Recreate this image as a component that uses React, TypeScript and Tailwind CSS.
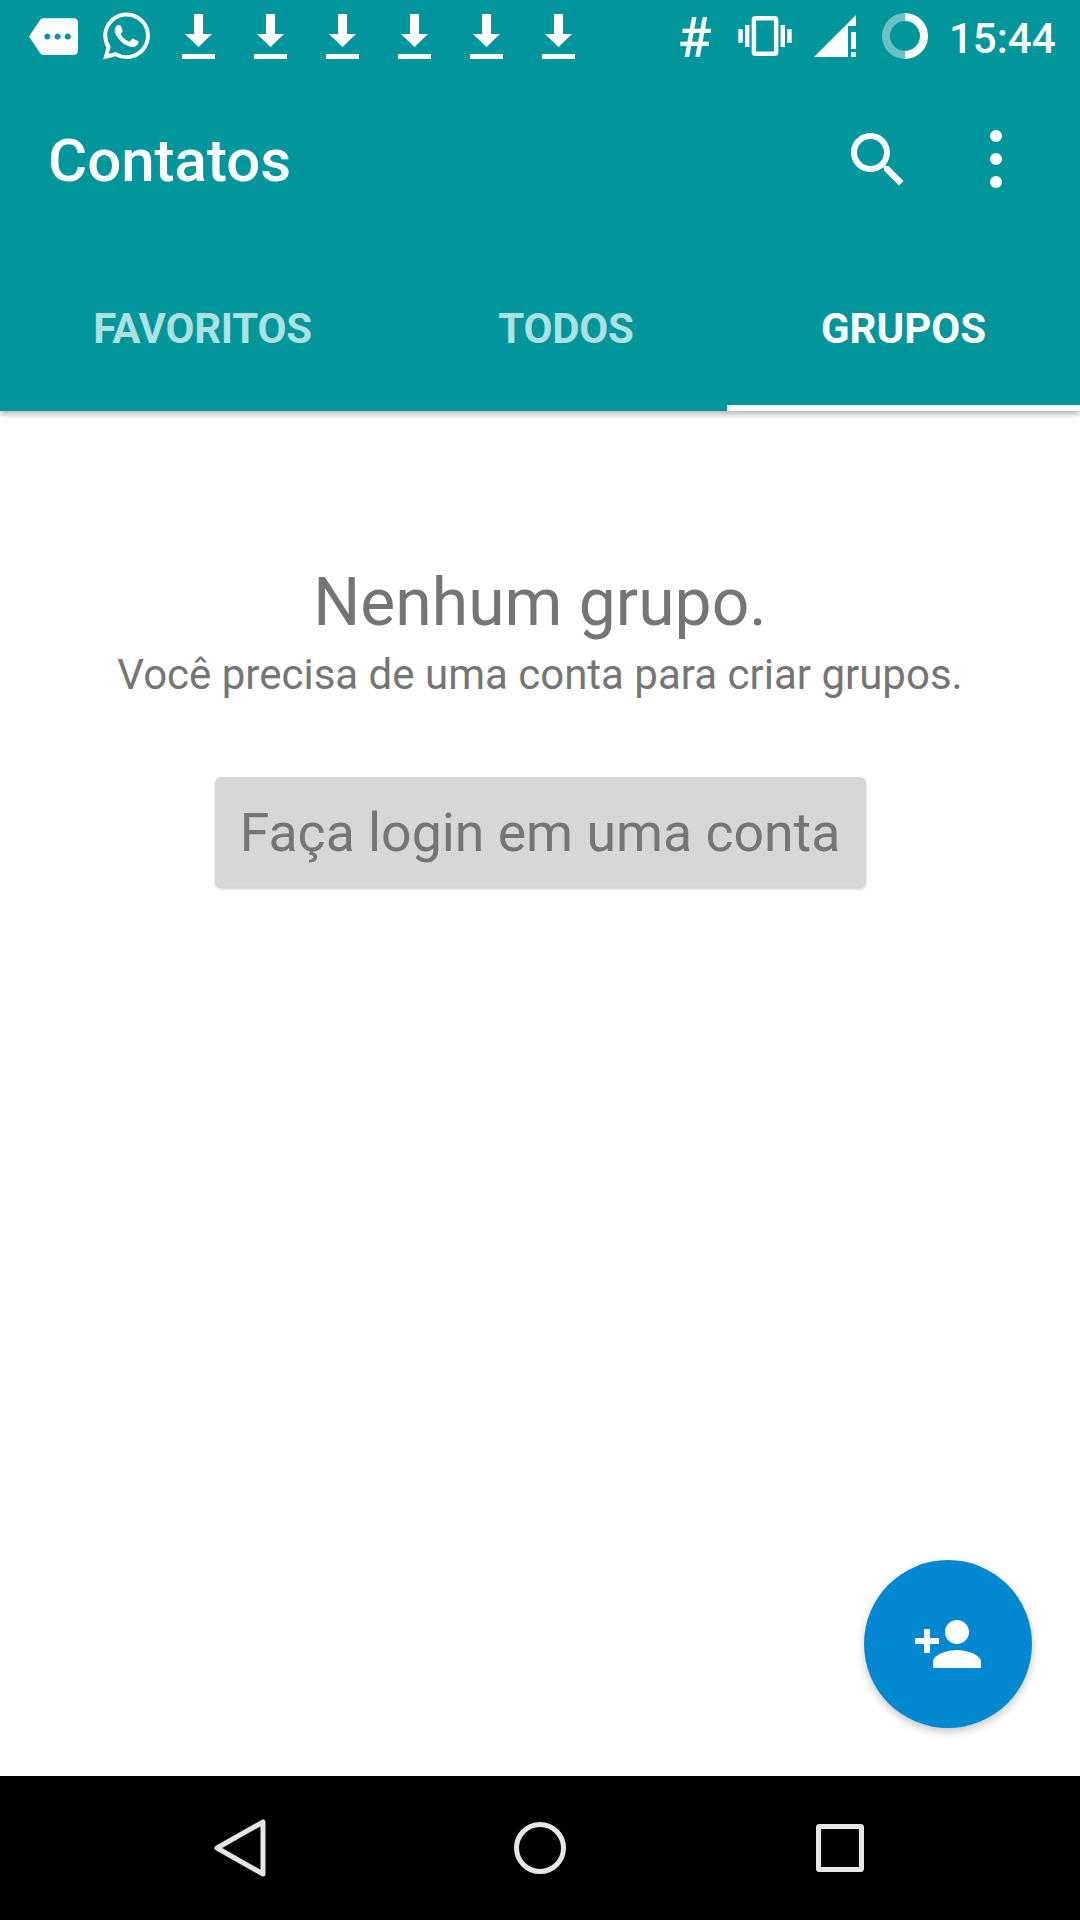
import React from "react";
import { SiWhatsapp } from "react-icons/si";

function Download() {
  return (
    <svg width="33" height="45" viewBox="0 0 33 45" fill="white" className="shrink-0">
      <path d="M12 0h9v20h9L16.5 33 3 20h9z" />
      <rect x="0" y="40" width="33" height="5" />
    </svg>
  );
}

export default function App() {
  return (
    <div className="relative flex h-[1920px] w-[1080px] flex-col overflow-hidden bg-white font-['Roboto',sans-serif]">
      <header className="relative z-10 flex flex-col bg-[#00969b] shadow-[0_3px_6px_rgba(0,0,0,0.3)]">
        {/* status bar */}
        <div className="flex h-[72px] items-center pl-[29px] text-white">
          <svg width="49" height="37" viewBox="0 3 24 18" fill="white" className="shrink-0">
            <path d="M22 3H7c-.69 0-1.23.35-1.59.88L0 12l5.41 8.11c.36.53.9.89 1.59.89h15c1.1 0 2-.9 2-2V5c0-1.1-.9-2-2-2zM9 13.5c-.83 0-1.5-.67-1.5-1.5s.67-1.5 1.5-1.5 1.5.67 1.5 1.5-.67 1.5-1.5 1.5zm5 0c-.83 0-1.5-.67-1.5-1.5s.67-1.5 1.5-1.5 1.5.67 1.5 1.5-.67 1.5-1.5 1.5zm5 0c-.83 0-1.5-.67-1.5-1.5s.67-1.5 1.5-1.5 1.5.67 1.5 1.5-.67 1.5-1.5 1.5z" />
          </svg>
          <SiWhatsapp className="ml-[25px] h-[48px] w-[47px] shrink-0" />
          <div className="ml-[32px] flex gap-[39px]">
            <Download />
            <Download />
            <Download />
            <Download />
            <Download />
            <Download />
          </div>
          <span className="mt-[3px] ml-[103px] w-[33px] text-center text-[56px] leading-none font-medium">#</span>
          <svg width="54" height="40" viewBox="0 3 24 18" fill="white" className="ml-[27px] shrink-0">
            <path d="M0 15h2V9H0v6zm3 2h2V7H3v10zm19-8v6h2V9h-2zm-3 8h2V7h-2v10zM16.5 3h-9C6.67 3 6 3.67 6 4.5v15c0 .83.67 1.5 1.5 1.5h9c.83 0 1.5-.67 1.5-1.5v-15c0-.83-.67-1.5-1.5-1.5zM16 19H8V5h8v14z" />
          </svg>
          <svg width="42" height="42" viewBox="0 0 42 42" fill="white" className="ml-[22px] shrink-0">
            <path d="M0 42 42 0v11H34v31z" />
            <rect x="37" y="17" width="5" height="17" />
            <rect x="37" y="37" width="5" height="5" />
          </svg>
          <svg width="46" height="46" viewBox="0 0 46 46" fill="none" strokeWidth="8" className="ml-[26px] shrink-0">
            <path d="M23 4a19 19 0 0 0 0 38" stroke="#6cc1c4" />
            <path d="M23 4a19 19 0 0 1 0 38" stroke="white" />
          </svg>
          <span className="mt-[6px] ml-[21px] text-[42px] leading-none font-medium">15:44</span>
        </div>
        {/* toolbar */}
        <div className="flex h-[174px] items-start pl-[48px] text-white">
          <h1 className="mt-[54px] text-[60px] leading-[70px] font-medium">Contatos</h1>
          <svg width="72" height="72" viewBox="0 0 24 24" fill="white" className="mt-[52px] ml-auto shrink-0">
            <path d="M15.5 14h-.79l-.28-.27C15.41 12.59 16 11.11 16 9.5 16 5.91 13.09 3 9.5 3S3 5.91 3 9.5 5.91 16 9.5 16c1.61 0 3.09-.59 4.23-1.57l.27.28v.79l5 4.99L20.49 19l-4.99-5zm-6 0C7.01 14 5 11.99 5 9.5S7.01 5 9.5 5 14 7.01 14 9.5 11.99 14 9.5 14z" />
          </svg>
          <svg width="12" height="58" viewBox="0 0 12 58" fill="white" className="mt-[58px] mr-[78px] ml-[76px] shrink-0">
            <circle cx="6" cy="6" r="6" />
            <circle cx="6" cy="29" r="6" />
            <circle cx="6" cy="52" r="6" />
          </svg>
        </div>
        {/* tabs */}
        <nav className="flex h-[165px] text-[42px] font-bold">
          <div className="flex w-[405px] items-center justify-center tracking-[-0.25px] text-[#ade0e0]">FAVORITOS</div>
          <div className="flex w-[322px] items-center justify-center tracking-[-0.25px] text-[#ade0e0]">TODOS</div>
          <div className="flex w-[353px] items-center justify-center border-b-[6px] border-white pt-[6px] text-white">GRUPOS</div>
        </nav>
      </header>

      <main className="relative flex flex-1 flex-col items-center pt-[153px] text-[#757575]">
        <h2 className="text-[66px] leading-[78px] font-normal">Nenhum grupo.</h2>
        <p className="mt-[4px] text-[42px] leading-[58px]">Você precisa de uma conta para criar grupos.</p>
        <button className="mt-[73px] flex h-[110px] w-[651px] items-center justify-center rounded-[6px] bg-[#d6d7d7] pt-[2px] text-[53.6px] shadow-[0_2px_3px_rgba(0,0,0,0.2)]">
          Faça login em uma conta
        </button>
        <button className="absolute right-[48px] bottom-[48px] flex h-[168px] w-[168px] items-center justify-center rounded-full bg-[#0288d1] shadow-[0_4px_8px_rgba(0,0,0,0.22)]">
          <svg width="72" height="72" viewBox="0 0 24 24" fill="white">
            <path d="M15 12c2.21 0 4-1.79 4-4s-1.79-4-4-4-4 1.79-4 4 1.79 4 4 4zm-9-2V7H4v3H1v2h3v3h2v-3h3v-2H6zm9 4c-2.67 0-8 1.34-8 4v2h16v-2c0-2.66-5.33-4-8-4z" />
          </svg>
        </button>
      </main>

      <footer className="grid h-[144px] grid-cols-3 items-center bg-black px-[90px]">
        <div className="flex justify-center">
          <svg width="52" height="58" viewBox="0 0 52 58" fill="none" stroke="#e6e6e6" strokeWidth="5" strokeLinejoin="round">
            <path d="M3 29 49 3v52z" />
          </svg>
        </div>
        <div className="flex justify-center">
          <svg width="52" height="52" viewBox="0 0 52 52" fill="none" stroke="#e6e6e6" strokeWidth="5">
            <circle cx="26" cy="26" r="23.5" />
          </svg>
        </div>
        <div className="flex justify-center">
          <svg width="48" height="48" viewBox="0 0 48 48" fill="none" stroke="#e6e6e6" strokeWidth="5" strokeLinejoin="round">
            <rect x="2.5" y="2.5" width="43" height="43" rx="1" />
          </svg>
        </div>
      </footer>
    </div>
  );
}
